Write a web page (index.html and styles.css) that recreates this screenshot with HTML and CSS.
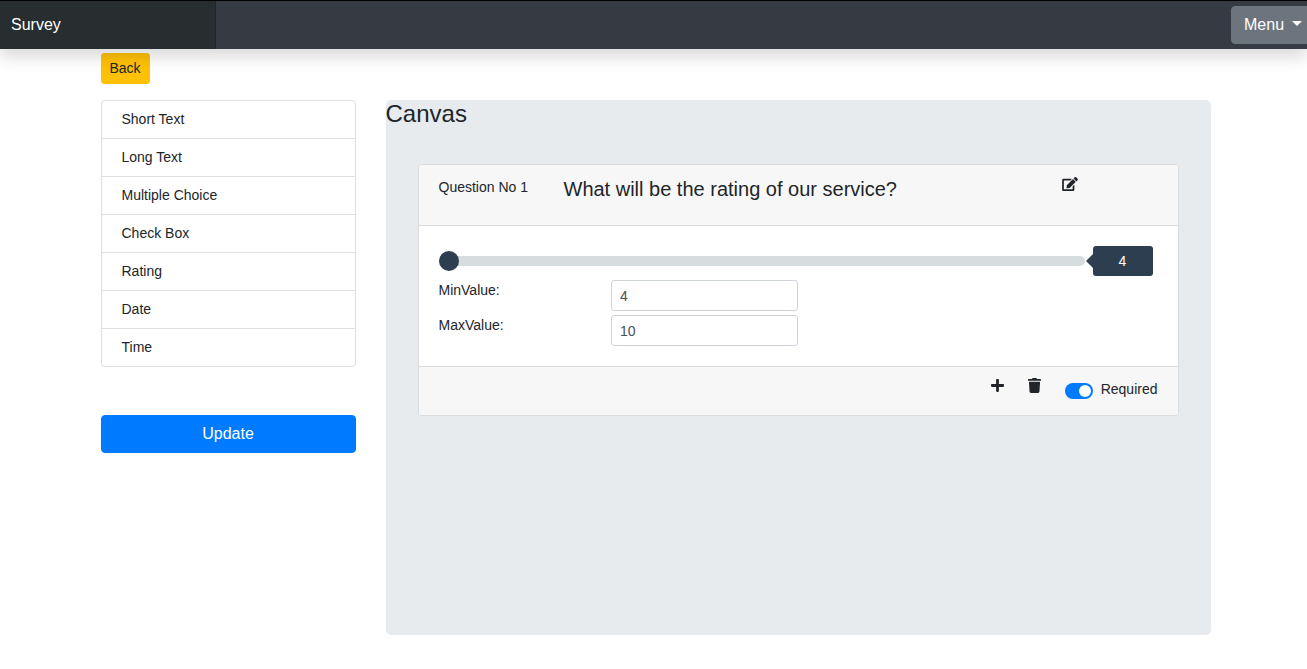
FILE: index.html
```html
<!DOCTYPE html>
<html lang="en">
<head>
<meta charset="utf-8">
<meta name="viewport" content="width=device-width, initial-scale=1">
<title>Survey</title>
<link rel="stylesheet" href="styles.css">
</head>
<body>
<header class="navbar">
  <a class="brand" href="#">Survey</a>
  <div class="nav-menu">
    <button type="button" class="btn btn-secondary">Menu<span class="caret"></span></button>
  </div>
</header>
<main class="page">
  <div class="container">
    <button type="button" class="btn btn-warning">Back</button>
    <div class="row">
      <aside class="sidebar">
        <ul class="list">
          <li>Short Text</li>
          <li>Long Text</li>
          <li>Multiple Choice</li>
          <li>Check Box</li>
          <li>Rating</li>
          <li>Date</li>
          <li>Time</li>
        </ul>
        <button type="button" class="btn btn-primary">Update</button>
      </aside>
      <section class="canvas">
        <h1 class="canvas-title">Canvas</h1>
        <article class="card">
          <header class="card-header">
            <span>Question No 1</span>
            <h2 class="question">What will be the rating of our service?</h2>
            <button type="button" class="icon-btn" aria-label="Edit">
              <svg width="16" height="14" viewBox="0 0 576 512" aria-hidden="true"><path d="M402.600 83.200l90.200 90.200c3.800 3.800 3.800 10 0 13.800L274.400 405.600l-92.800 10.300c-12.400 1.400-22.900-9.100-21.500-21.500l10.300-92.800L388.800 83.200c3.800-3.800 10-3.800 13.800 0zm162-22.900l-48.800-48.800c-15.200-15.200-39.900-15.200-55.200 0l-35.400 35.400c-3.800 3.800-3.800 10 0 13.800l90.200 90.200c3.800 3.800 10 3.800 13.800 0l35.400-35.400c15.200-15.300 15.200-40 0-55.200zM384 346.200V448H64V128h229.800c3.200 0 6.200-1.300 8.500-3.500l40-40c7.600-7.600 2.200-20.500-8.500-20.500H48C21.500 64 0 85.500 0 112v352c0 26.500 21.500 48 48 48h352c26.500 0 48-21.500 48-48V306.200c0-10.700-12.900-16-20.500-8.500l-40 40c-2.200 2.300-3.500 5.300-3.500 8.500z"/></svg>
            </button>
          </header>
          <div class="card-body">
            <div class="slider">
              <input type="range" class="range" id="rating" min="4" max="10" value="4" aria-label="Rating">
              <output class="range-value" for="rating">4</output>
            </div>
            <div class="field">
              <label for="min">MinValue:</label>
              <input type="text" class="input" id="min" value="4">
            </div>
            <div class="field">
              <label for="max">MaxValue:</label>
              <input type="text" class="input" id="max" value="10">
            </div>
          </div>
          <footer class="card-footer">
            <button type="button" class="icon-btn" aria-label="Add">
              <svg width="13" height="15" viewBox="0 0 448 512" aria-hidden="true"><path d="M416 208H272V64c0-17.700-14.300-32-32-32h-32c-17.700 0-32 14.300-32 32v144H32c-17.700 0-32 14.300-32 32v32c0 17.700 14.300 32 32 32h144v144c0 17.700 14.300 32 32 32h32c17.700 0 32-14.300 32-32V304h144c17.700 0 32-14.300 32-32v-32c0-17.700-14.300-32-32-32z"/></svg>
            </button>
            <button type="button" class="icon-btn" aria-label="Delete">
              <svg width="13" height="15" viewBox="0 0 448 512" aria-hidden="true"><path d="M432 32H312l-9.400-18.700A24 24 0 0 0 281.100 0H166.800a23.700 23.700 0 0 0-21.400 13.300L136 32H16A16 16 0 0 0 0 48v32a16 16 0 0 0 16 16h416a16 16 0 0 0 16-16V48a16 16 0 0 0-16-16zM53.200 467a48 48 0 0 0 47.900 45h245.800a48 48 0 0 0 47.900-45L416 128H32z"/></svg>
            </button>
            <label class="switch"><input type="checkbox" checked>Required</label>
          </footer>
        </article>
      </section>
    </div>
  </div>
</main>
</body>
</html>
```
FILE: styles.css
```css
*,
*::before,
*::after {
  box-sizing: border-box;
}

body {
  margin: 0;
  overflow-x: hidden;
  background: #fff;
  color: #212529;
  font: 14px/21px "Liberation Sans", Arial, sans-serif;
}

button,
input {
  font-family: inherit;
}

/* Top bar */
.navbar {
  position: relative;
  z-index: 1;
  display: flex;
  align-items: stretch;
  justify-content: space-between;
  height: 49px;
  border-top: 1px solid #000;
  background: #363a43;
  box-shadow: 0 8px 16px rgba(0, 0, 0, .15);
}

.brand {
  flex: 0 0 216px;
  padding: 12px 11px;
  border-right: 1px solid #1f2327;
  background: #282d30;
  color: #fff;
  font-size: 16px;
  line-height: 24px;
  text-decoration: none;
}

.nav-menu {
  flex: 0 0 76px;
  min-width: 0;
  padding-top: 5px;
}

.btn {
  padding: 6px 12px;
  border: 1px solid transparent;
  border-radius: 4px;
  font-size: 16px;
  line-height: 24px;
  white-space: nowrap;
}

.btn-secondary {
  border-color: #6c757d;
  background: #6c757d;
  color: #fff;
}

.caret {
  display: inline-block;
  margin-left: 8px;
  border: 5px solid transparent;
  border-top-color: #fff;
  border-bottom: 0;
  vertical-align: 4px;
}

.btn-warning {
  padding: 4px 8px;
  border-color: #ffc107;
  border-radius: 3px;
  background: #ffc107;
  color: #212529;
  font-size: 14px;
  line-height: 21px;
}

.btn-primary {
  width: 100%;
  border-color: #007bff;
  background: #007bff;
  color: #fff;
}

/* Page grid */
.page {
  padding: 4px 0 0 4px;
}

.container {
  max-width: 1110px;
  margin: 0 auto;
}

.row {
  display: flex;
  gap: 30px;
  margin-top: 16px;
}

.sidebar {
  flex: 0 0 255px;
}

.list {
  margin: 0 0 48px;
  padding: 0;
  border: 1px solid #dfdfdf;
  border-radius: 4px;
  list-style: none;
}

.list li {
  padding: 8px 20px;
}

.list li + li {
  border-top: 1px solid #dfdfdf;
}

.canvas {
  flex: 1;
  min-height: 80vh;
  border-radius: 5px;
  background: #e7ebee;
}

.canvas-title {
  margin: 0 0 36px;
  font-size: 24px;
  font-weight: 400;
  line-height: 28px;
}

/* Question card */
.card {
  margin: 0 32px;
  border: 1px solid #d9dbdd;
  border-radius: 4px;
  background: #fff;
}

.card-header {
  display: grid;
  grid-template-columns: 125px 1fr 96px;
  align-items: start;
  padding: 12px 20px;
  border-bottom: 1px solid #d9dbdd;
  border-radius: 3px 3px 0 0;
  background: #f7f7f7;
}

.question {
  margin: 0 0 12px;
  font-size: 20px;
  font-weight: 400;
  line-height: 24px;
}

.icon-btn {
  display: flex;
  padding: 0;
  border: 0;
  background: none;
  color: #212529;
}

.icon-btn svg {
  fill: currentColor;
}

.card-body {
  display: flex;
  flex-direction: column;
  gap: 4px;
  padding: 20px;
}

.slider {
  display: flex;
  align-items: center;
  gap: 8px;
  margin-right: 5px;
}

.range {
  flex: 1;
  height: 10px;
  margin: 0;
  border-radius: 5px;
  background: #d7dcdf;
  appearance: none;
}

.range::-webkit-slider-thumb {
  width: 20px;
  height: 20px;
  border-radius: 50%;
  background: #2c3e50;
  appearance: none;
}

.range-value {
  position: relative;
  width: 60px;
  padding: 5px 10px;
  border-radius: 3px;
  background: #2c3e50;
  color: #fff;
  line-height: 20px;
  text-align: center;
}

.range-value::after {
  content: "";
  position: absolute;
  top: 8px;
  left: -7px;
  border: 7px solid transparent;
  border-left: 0;
  border-right-color: #2c3e50;
}

.field {
  display: grid;
  grid-template-columns: 24% 26%;
}

.input {
  width: 100%;
  height: 31px;
  padding: 4px 8px;
  border: 1px solid #ced4da;
  border-radius: 3px;
  background: #fff;
  color: #495057;
  font-size: 14px;
  line-height: 21px;
}

.card-footer {
  display: flex;
  justify-content: flex-end;
  align-items: flex-start;
  padding: 11px 20px 15px;
  border-top: 1px solid #d9dbdd;
  border-radius: 0 0 3px 3px;
  background: #f7f7f7;
}

.card-footer .icon-btn {
  margin-right: 24px;
}

.switch {
  display: flex;
  align-items: center;
  gap: 8px;
  height: 22px;
}

.switch input {
  display: flex;
  justify-content: flex-end;
  width: 28px;
  height: 16px;
  margin: 4px 0 0;
  padding: 2px;
  border-radius: 8px;
  background: #adb5bd;
  appearance: none;
}

.switch input:checked {
  background: #007bff;
}

.switch input::before {
  content: "";
  width: 12px;
  height: 12px;
  border-radius: 50%;
  background: #fff;
}
```
